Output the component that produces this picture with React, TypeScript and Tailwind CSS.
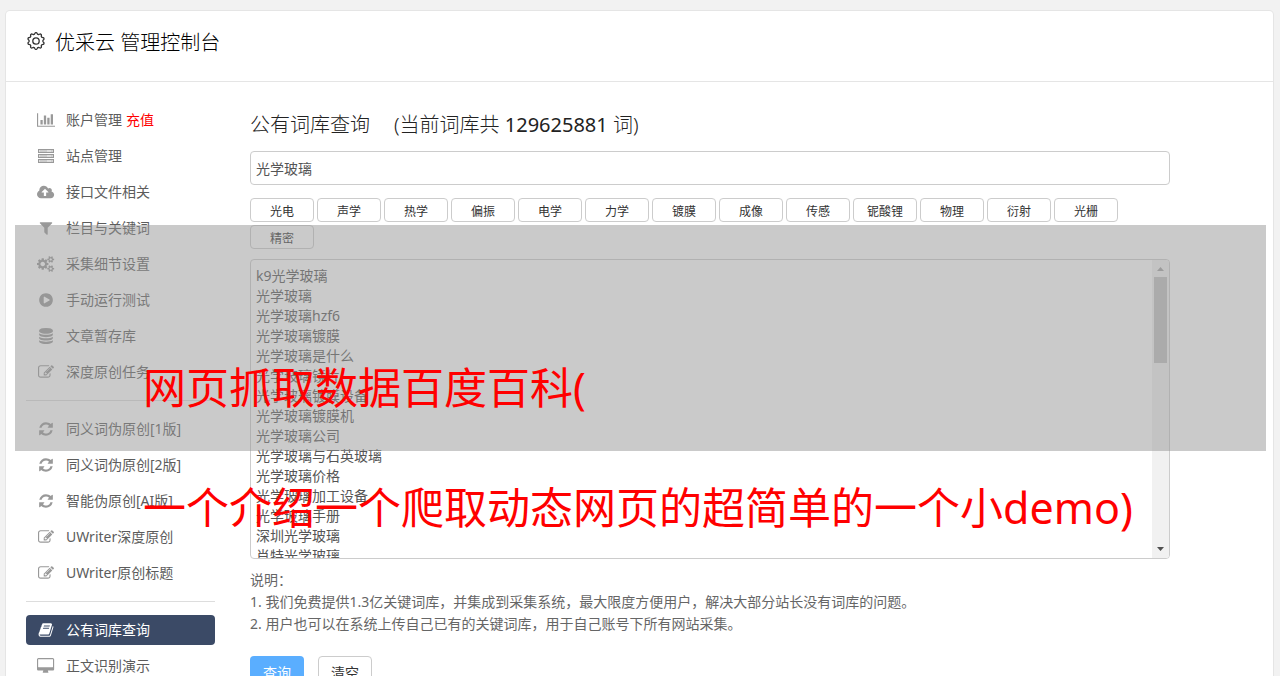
import type { ReactNode } from "react";

type IconProps = { d: string; w?: number };

function Glyph({ d, w = 1792 }: IconProps) {
  return (
    <svg viewBox={`0 0 ${w} 1792`} className="h-4 w-auto" fill="currentColor" aria-hidden="true">
      <path d={d} />
    </svg>
  );
}

const CHART =
  "M640 896v512h-256v-512h256zm384-512v1024h-256v-1024h256zm1024 1152v128h-2048v-1536h128v1408h1920zm-640-896v768h-256v-768h256zm384-384v1152h-256v-1152h256z";
const CLOUD =
  "M1280 928q0-14-9-23l-352-352q-9-9-23-9t-23 9l-351 351q-10 12-10 24 0 14 9 23t23 9h224v352q0 13 9.5 22.5t22.5 9.5h192q13 0 22.5-9.5t9.5-22.5v-352h224q13 0 22.5-9.5t9.5-22.5zm640 288q0 159-112.5 271.5t-271.5 112.5h-1088q-185 0-316.5-131.5t-131.5-316.5q0-130 70-240t188-165q-2-30-2-43 0-212 150-362t362-150q156 0 285.5 87t188.5 231q71-62 166-62 106 0 181 75t75 181q0 76-41 138 130 31 213.5 135.5t83.5 238.5z";
const FILTER =
  "M1595 295q17 41-14 70l-493 493v742q0 42-39 59-13 5-25 5-27 0-45-19l-256-256q-19-19-19-45v-486l-493-493q-31-29-14-70 17-39 59-39h1280q42 0 59 39z";
const PLAY =
  "M896 128q209 0 385.5 103t279.5 279.5 103 385.5-103 385.5-279.5 279.5-385.5 103-385.5-103-279.5-279.5-103-385.5 103-385.5 279.5-279.5 385.5-103zm384 823q32-18 32-55t-32-55l-544-320q-31-19-64-1-32 19-32 56v640q0 37 32 56 16 8 32 8 17 0 32-9z";
const DATABASE =
  "M896 768q237 0 443-43t325-127v170q0 69-103 128t-280 93.5-385 34.5-385-34.5-280-93.5-103-128v-170q119 84 325 127t443 43zm0 768q237 0 443-43t325-127v170q0 69-103 128t-280 93.5-385 34.5-385-34.5-280-93.5-103-128v-170q119 84 325 127t443 43zm0-384q237 0 443-43t325-127v170q0 69-103 128t-280 93.5-385 34.5-385-34.5-280-93.5-103-128v-170q119 84 325 127t443 43zm0-1152q208 0 385 34.5t280 93.5 103 128v128q0 69-103 128t-280 93.5-385 34.5-385-34.5-280-93.5-103-128v-128q0-69 103-128t280-93.5 385-34.5z";
const EDIT =
  "M888 1184l116-116-152-152-116 116v56h96v96h56zm440-720q-16-16-33 1l-350 350q-17 17-1 33t33-1l350-350q17-17 1-33zm80 594v190q0 119-84.5 203.5t-203.5 84.5h-832q-119 0-203.5-84.5t-84.5-203.5v-832q0-119 84.5-203.5t203.5-84.5h832q63 0 117 25 15 7 18 23 3 17-9 29l-49 49q-14 14-32 8-23-6-45-6h-832q-66 0-113 47t-47 113v832q0 66 47 113t113 47h832q66 0 113-47t47-113v-126q0-13 9-22l64-64q15-15 35-7t20 29zm-96-738l288 288-672 672h-288v-288zm444 132l-92 92-288-288 92-92q28-28 68-28t68 28l152 152q28 28 28 68t-28 68z";
const REFRESH =
  "M1639 1056q0 5-1 7-64 268-268 434.5t-478 166.5q-146 0-282.5-55t-243.5-157l-129 129q-19 19-45 19t-45-19-19-45v-448q0-26 19-45t45-19h448q26 0 45 19t19 45-19 45l-137 137q71 66 161 102t187 36q134 0 250-65t186-179q11-17 53-117 8-23 30-23h192q13 0 22.5 9.5t9.5 22.5zm25-800v448q0 26-19 45t-45 19h-448q-26 0-45-19t-19-45 19-45l138-138q-148-137-349-137-134 0-250 65t-186 179q-11 17-53 117-8 23-30 23h-199q-13 0-22.5-9.5t-9.5-22.5v-7q65-268 270-434.5t480-166.5q146 0 284 55.5t245 156.5l130-129q19-19 45-19t45 19 19 45z";
const BOOK =
  "M1703 478q40 57 18 129l-275 906q-19 64-76.5 107.5t-122.5 43.5h-923q-77 0-148.5-53.5t-99.5-131.5q-24-67-2-127 0-4 3-27t4-37q1-8-3-21.5t-3-19.5q2-11 8-21t16.5-23.5 16.5-23.5q23-38 45-91.5t30-91.5q3-10 .5-30t-.5-28q3-11 17-28t17-23q21-36 42-92t25-90q1-9-2.5-32t.5-28q4-13 22-30.5t22-22.5q19-26 42.5-84.5t27.5-96.5q1-8-3-25.5t-2-26.5q2-8 9-18t18-23 17-21q8-12 16.5-30.5t15-35 16-36 19.5-32 26.5-23.5 36-11.5 47.5 5.5l-1 3q38-9 51-9h761q74 0 114 56t18 130l-274 906q-36 119-71.5 153.5t-128.5 34.5h-869q-27 0-38 15-11 16-1 43 24 70 144 70h923q29 0 56-15.5t35-41.5l300-987q7-22 5-57 38 15 59 43zm-1064 2q-4 13 2 22.5t20 9.5h608q13 0 25.5-9.5t16.5-22.5l21-64q4-13-2-22.5t-20-9.5h-608q-13 0-25.5 9.5t-16.5 22.5zm-83 256q-4 13 2 22.5t20 9.5h608q13 0 25.5-9.5t16.5-22.5l21-64q4-13-2-22.5t-20-9.5h-608q-13 0-25.5 9.5t-16.5 22.5z";
const DESKTOP =
  "M1792 992v-832q0-13-9.5-22.5t-22.5-9.5h-1600q-13 0-22.5 9.5t-9.5 22.5v832q0 13 9.5 22.5t22.5 9.5h1600q13 0 22.5-9.5t9.5-22.5zm128-832v1088q0 66-47 113t-113 47h-544q0 37 16 77.5t32 71 16 43.5q0 26-19 45t-45 19h-512q-26 0-45-19t-19-45q0-14 16-44t32-70 16-78h-544q-66 0-113-47t-47-113v-1088q0-66 47-113t113-47h1600q66 0 113 47t47 113z";
const COGS =
  "M896 896q0-106-75-181t-181-75-181 75-75 181 75 181 181 75 181-75 75-181zm768 512q0-52-38-90t-90-38-90 38-38 90q0 53 37.5 90.5t90.5 37.5 90.5-37.5 37.5-90.5zm0-1024q0-52-38-90t-90-38-90 38-38 90q0 53 37.5 90.5t90.5 37.5 90.5-37.5 37.5-90.5zm-384 421v185q0 10-7 19.5t-16 10.5l-155 24q-11 35-32 76 34 48 90 115 7 11 7 20 0 12-7 19-23 30-82.5 89.5t-78.5 59.5q-11 0-21-7l-115-90q-37 19-77 31-11 108-23 155-7 24-30 24h-186q-11 0-20-7.5t-10-17.5l-23-153q-34-10-75-31l-118 89q-7 7-20 7-11 0-21-8-144-133-144-160 0-9 7-19 10-14 41-53t47-61q-23-44-35-82l-152-24q-10-1-17-9.5t-7-19.5v-185q0-10 7-19.5t16-10.5l155-24q11-35 32-76-34-48-90-115-7-11-7-20 0-12 7-20 22-30 82-89t79-59q11 0 21 7l115 90q34-18 77-32 11-108 23-154 7-24 30-24h186q11 0 20 7.5t10 17.5l23 153q34 10 75 31l118-89q8-7 20-7 11 0 21 8 144 133 144 160 0 8-7 19-12 16-42 54t-45 60q23 48 34 82l152 23q10 2 17 10.5t7 19.5zm640 533v140q0 16-149 31-12 27-30 52 51 113 51 138 0 4-4 7-122 71-124 71-8 0-46-47t-52-68q-20 2-30 2t-30-2q-14 21-52 68t-46 47q-2 0-124-71-4-3-4-7 0-25 51-138-18-25-30-52-149-15-149-31v-140q0-16 149-31 13-29 30-52-51-113-51-138 0-4 4-7 4-2 35-20t59-34 30-16q8 0 46 46.5t52 67.5q20-2 30-2t30 2q51-71 92-112l6-2q4 0 124 70 4 3 4 7 0 25-51 138 17 23 30 52 149 15 149 31zm0-1024v140q0 16-149 31-12 27-30 52 51 113 51 138 0 4-4 7-122 71-124 71-8 0-46-47t-52-68q-20 2-30 2t-30-2q-14 21-52 68t-46 47q-2 0-124-71-4-3-4-7 0-25 51-138-18-25-30-52-149-15-149-31v-140q0-16 149-31 13-29 30-52-51-113-51-138 0-4 4-7 4-2 35-20t59-34 30-16q8 0 46 46.5t52 67.5q20-2 30-2t30 2q51-71 92-112l6-2q4 0 124 70 4 3 4 7 0 25-51 138 17 23 30 52 149 15 149 31z";

function ServerIcon() {
  return (
    <svg viewBox="0 0 16 14" className="h-[14px] w-4" fill="none" stroke="currentColor" aria-hidden="true">
      {[0.5, 5.5, 10.5].map((y) => (
        <g key={y}>
          <rect x="0.5" y={y} width="15" height="3" fill="#ddd" />
          <path d={`M2 ${y + 1.5}h7M13 ${y + 1.5}h1.5`} strokeOpacity="0.5" />
        </g>
      ))}
    </svg>
  );
}

function gearPath() {
  const teeth = 10;
  const points: string[] = [];
  for (let i = 0; i <= 160; i++) {
    const a = (i / 160) * Math.PI * 2;
    const wave = Math.max(-1, Math.min(1, 1.3 * Math.cos(teeth * (a - Math.PI / 2))));
    const r = 7.6 + 0.7 * wave;
    points.push(`${(9 + r * Math.cos(a)).toFixed(2)} ${(9 + r * Math.sin(a)).toFixed(2)}`);
  }
  return `M${points.join("L")}Z`;
}

function GearIcon() {
  return (
    <svg viewBox="0 0 18 18" className="mt-[3px] size-[18px]" fill="none" stroke="#333" strokeWidth="1.3" aria-hidden="true">
      <path d={gearPath()} />
      <circle cx="9" cy="9" r="3.2" />
    </svg>
  );
}

type Item = { label: string; icon: ReactNode; extra?: string; active?: boolean };

const edit = <Glyph d={EDIT} />;
const refresh = <Glyph d={REFRESH} />;

const groups: Item[][] = [
  [
    { label: "账户管理", extra: "充值", icon: <Glyph d={CHART} w={2048} /> },
    { label: "站点管理", icon: <ServerIcon /> },
    { label: "接口文件相关", icon: <Glyph d={CLOUD} w={1920} /> },
    { label: "栏目与关键词", icon: <Glyph d={FILTER} /> },
    { label: "采集细节设置", icon: <Glyph d={COGS} w={1920} /> },
    { label: "手动运行测试", icon: <Glyph d={PLAY} /> },
    { label: "文章暂存库", icon: <Glyph d={DATABASE} /> },
    { label: "深度原创任务", icon: edit },
  ],
  [
    { label: "同义词伪原创[1版]", icon: refresh },
    { label: "同义词伪原创[2版]", icon: refresh },
    { label: "智能伪原创[AI版]", icon: refresh },
    { label: "UWriter深度原创", icon: edit },
    { label: "UWriter原创标题", icon: edit },
  ],
  [
    { label: "公有词库查询", icon: <Glyph d={BOOK} />, active: true },
    { label: "正文识别演示", icon: <Glyph d={DESKTOP} w={1920} /> },
  ],
];

const tags = ["光电", "声学", "热学", "偏振", "电学", "力学", "镀膜", "成像", "传感", "铌酸锂", "物理", "衍射", "光栅", "精密"];

const words = [
  "k9光学玻璃",
  "光学玻璃",
  "光学玻璃hzf6",
  "光学玻璃镀膜",
  "光学玻璃是什么",
  "光学玻璃镜片",
  "光学玻璃镀膜设备",
  "光学玻璃镀膜机",
  "光学玻璃公司",
  "光学玻璃与石英玻璃",
  "光学玻璃价格",
  "光学玻璃加工设备",
  "光学玻璃手册",
  "深圳光学玻璃",
  "肖特光学玻璃",
];

function Sidebar() {
  return (
    <nav className="w-[189px] shrink-0">
      {groups.map((group, i) => (
        <ul
          key={i}
          className={
            i > 0
              ? "mt-[13px] flex flex-col gap-[6px] border-t border-[#ddd] pt-[13px]"
              : "flex flex-col gap-[6px]"
          }
        >
          {group.map((item) => (
            <li key={item.label}>
              <a
                href="#"
                className={
                  item.active
                    ? "flex h-[30px] items-center rounded bg-[#3b4a66] pl-[10px] text-sm text-white"
                    : "flex h-[30px] items-center rounded pl-[10px] text-sm text-[#5c5c5c]"
                }
              >
                <span
                  className={
                    item.active
                      ? "mr-[10px] flex w-5 justify-center text-white"
                      : "mr-[10px] flex w-5 justify-center text-[#999]"
                  }
                >
                  {item.icon}
                </span>
                <span>{item.label}</span>
                {item.extra && <span className="ml-1 text-[#f00]">{item.extra}</span>}
              </a>
            </li>
          ))}
        </ul>
      ))}
    </nav>
  );
}

function WordList() {
  return (
    <div className="mt-[10px] flex h-[300px] overflow-hidden rounded border border-[#ccc]">
      <textarea
        aria-label="词库结果"
        defaultValue={words.join("\n")}
        className="min-w-0 flex-1 resize-none overflow-hidden px-[5px] pt-[6px] text-sm leading-5 text-[#555] outline-none"
      />
      <div className="flex w-[17px] flex-col items-center bg-[#f1f1f1]" aria-hidden="true">
        <svg viewBox="0 0 17 17" className="size-[17px]">
          <path d="M5 11h7L8.5 7z" fill="#a3a3a3" />
        </svg>
        <div className="h-[86px] w-[13px] bg-[#c1c1c1]" />
        <svg viewBox="0 0 17 17" className="mt-auto size-[17px]">
          <path d="M5 6h7L8.5 10z" fill="#505050" />
        </svg>
      </div>
    </div>
  );
}

function Query() {
  return (
    <main className="max-w-[920px] min-w-0 flex-1">
      <h2 className="flex gap-6 text-xl leading-10 font-light text-[#222]">
        <span>公有词库查询</span>
        <span>
          (当前词库共 <span className="font-normal">129625881</span> 词)
        </span>
      </h2>
      <input
        aria-label="关键词"
        defaultValue="光学玻璃"
        className="mt-[6px] block h-[34px] w-full rounded border border-[#ccc] px-[5px] text-sm text-[#555] outline-none"
      />
      <div className="mt-[13px] flex flex-wrap gap-[3px]">
        {tags.map((t) => (
          <button
            key={t}
            type="button"
            className="flex h-6 w-16 items-center justify-center rounded border border-[#ccc] bg-white pt-1 text-xs text-[#333]"
          >
            {t}
          </button>
        ))}
      </div>
      <WordList />
      <div className="mt-[10px] text-sm leading-[22px] text-[#666]">
        <p>说明：</p>
        <p>1. 我们免费提供1.3亿关键词库，并集成到采集系统，最大限度方便用户，解决大部分站长没有词库的问题。</p>
        <p>2. 用户也可以在系统上传自己已有的关键词库，用于自己账号下所有网站采集。</p>
      </div>
      <div className="mt-[21px] flex gap-[14px]">
        <button type="button" className="h-[34px] w-[54px] rounded bg-[#5aaeff] text-sm text-white">
          查询
        </button>
        <button type="button" className="h-[34px] w-[54px] rounded border border-[#ccc] bg-white text-sm text-[#333]">
          清空
        </button>
      </div>
    </main>
  );
}

export default function App() {
  return (
    <div className="relative h-screen overflow-hidden bg-[#f2f2f2] pt-[11px] pr-[7px] pl-[6px] font-['Noto_Sans','Noto_Sans_CJK_SC',sans-serif]">
      <div className="min-h-full rounded-t bg-white shadow-[0_0_0_1px_#e5e5e5]">
        <header className="flex h-[71px] items-start border-b border-[#e5e5e5] pt-[18px] pl-[21px]">
          <GearIcon />
          <h1 className="ml-[10px] text-xl leading-7 font-light text-black">优采云 管理控制台</h1>
        </header>
        <div className="flex gap-[35px] px-5 pt-[23px]">
          <Sidebar />
          <Query />
        </div>
      </div>
      <div className="absolute top-[225px] right-[14px] left-[15px] h-[226px] bg-[#969696]/50" />
      <p className="absolute top-[328px] left-[143px] text-[43px] leading-[120px] whitespace-nowrap text-[#f00]">
        网页抓取数据百度百科(
        <br />
        一个介绍一个爬取动态网页的超简单的一个小demo)
      </p>
    </div>
  );
}
